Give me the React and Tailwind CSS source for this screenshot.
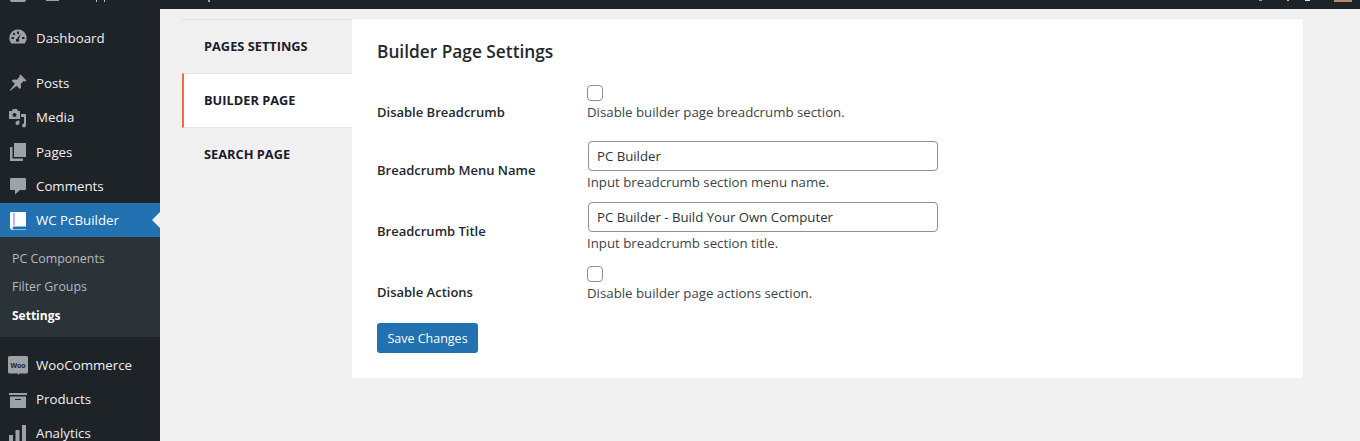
const F = '[font-family:"Open_Sans","Noto_Sans",sans-serif]';

const Dash = () => (
  <svg viewBox="0 0 20 20" className="w-5 h-5" fill="#9ca2a7"><path d="M10 1.500a8.500 8.500 0 0 0-7 13.400l.5.600h13l.5-.6A8.500 8.500 0 0 0 10 1.500z"/><g fill="#1d2327"><rect x="9" y="3.500" width="2" height="2.500"/><rect x="3.500" y="9" width="2.500" height="2"/><rect x="14" y="9" width="2.500" height="2"/><rect x="5" y="5" width="2" height="2" transform="rotate(45 6 6)"/><path d="M12.800 5.600 10.900 11.200a1.700 1.700 0 1 1-1.600-.6z"/></g></svg>
);
const Pin = () => (
  <svg viewBox="0 0 20 20" className="w-5 h-5" fill="#9ca2a7"><path d="M12.500 1.500 18.500 7.500l-1.600 1-1.200-.6-3 3 .4 3.600-1.400 1.400-3-3.200L2 18l-.4-.4 5.300-6.800-3.200-3 1.400-1.400 3.600.4 3-3-.6-1.200z"/></svg>
);
const Media = () => (
  <svg viewBox="0 0 20 20" className="w-5 h-5" fill="#9ca2a7"><path d="M1 3h3l1-2h4l1 2h2v8H1zM6.500 5a2 2 0 1 0 .01 0z" fillRule="evenodd"/><path d="M13 6h5v11.500a2 2 0 1 1-2-2V9h-3zM11.500 12.500V15a2 2 0 1 1-2-1.900V12.500z"/></svg>
);
const Pages = () => (
  <svg viewBox="0 0 20 20" className="w-5 h-5" fill="#9ca2a7"><path d="M6 1h12v14H6z"/><path d="M2 5h2.500v11.500H15V19H2z"/></svg>
);
const Comment = () => (
  <svg viewBox="0 0 20 20" className="w-5 h-5" fill="#9ca2a7"><path d="M3 2h14a1 1 0 0 1 1 1v10a1 1 0 0 1-1 1h-5l-5 4.500V14H3a1 1 0 0 1-1-1V3a1 1 0 0 1 1-1z"/></svg>
);
const Book = () => (
  <svg viewBox="0 0 20 20" className="w-5 h-5" fill="#fff"><path d="M3 1h15v14.500H6a1.500 1.500 0 0 0 0 3h12V19H5a3 3 0 0 1-3-2.500V2a1 1 0 0 1 1-1z"/><rect x="5.500" y="2" width="1" height="12.500" fill="#7f6fd0"/></svg>
);
const Woo = () => (
  <svg viewBox="0 0 20 20" className="w-5 h-5"><path d="M1.500 0h17A1.500 1.500 0 0 1 20 1.500V16a1.500 1.500 0 0 1-1.500 1.500h-7l-1 1.500-.8-1.500H1.500A1.500 1.500 0 0 1 0 16V1.500A1.500 1.500 0 0 1 1.500 0z" fill="#9ca2a7"/><text x="10" y="11.500" textAnchor="middle" fontSize="7" fontWeight="700" fill="#1d2327" fontFamily="Liberation Sans">Woo</text></svg>
);
const Box = () => (
  <svg viewBox="0 0 20 20" className="w-5 h-5" fill="#9ca2a7"><rect x="1" y="3" width="18" height="2"/><path d="M2 6.500h16V18H2zM7 9v1h6V9z" fillRule="evenodd"/></svg>
);
const Bars = () => (
  <svg viewBox="0 0 20 20" className="w-5 h-5" fill="#9ca2a7"><rect x="1" y="11" width="4" height="8"/><rect x="7.500" y="6" width="4" height="13"/><rect x="14" y="1" width="4" height="18"/></svg>
);

const Item = ({ icon, label, className = "", textClass = "" }) => (
  <div className={`flex items-center h-[34.300px] pl-[8px] gap-[8px] text-[#f0f0f1] ${className}`}>
    <span className="w-5 h-5 shrink-0 flex items-center justify-center">{icon}</span>
    <span className={textClass}>{label}</span>
  </div>
);

const Sub = ({ label, bold }) => (
  <div className={`h-[28.500px] flex items-center pl-[12px] ${bold ? "text-[12px] font-bold text-white" : "text-[12.400px] text-[#b4b9be]"}`}>{label}</div>
);

const Sidebar = () => (
  <aside className="w-[160px] shrink-0 bg-[#1d2327] text-[13.300px] overflow-hidden">
    <div className="pt-[12px]">
      <Item icon={<Dash />} label="Dashboard" textClass="mt-[2px]" />
    </div>
    <div className="mt-[11px]">
      <Item icon={<Pin />} label="Posts" textClass="mt-[2px]" />
      <Item icon={<Media />} label="Media" />
      <Item icon={<Pages />} label="Pages" textClass="mt-[2px]" />
      <Item icon={<Comment />} label="Comments" textClass="mt-[2px]" />
    </div>
    <div className="relative bg-[#2271b1] h-[34px]">
      <Item icon={<Book />} label="WC PcBuilder" className="text-white" />
      <span className="absolute right-0 top-[9px] border-y-[8px] border-r-[8px] border-y-transparent border-r-[#f0f0f1]" />
    </div>
    <div className="bg-[#2c3338] pt-[7.500px] pb-[7px]">
      <Sub label="PC Components" />
      <Sub label="Filter Groups" />
      <Sub label="Settings" bold />
    </div>
    <div className="mt-[11px]">
      <Item icon={<Woo />} label="WooCommerce" />
      <Item icon={<Box />} label="Products" />
      <Item icon={<Bars />} label="Analytics" />
    </div>
  </aside>
);

const Tab = ({ label, active, className = "" }) => (
  <div className={`flex items-center text-[12.800px] font-bold text-[#1b1b2a] ${active ? "h-[55px] bg-white border-y border-[#e2e2e2] border-l-[2px] border-l-[#f26a45] pl-[20px]" : "h-[54px] pl-[22px]"} ${className}`}>{label}</div>
);

const Row = ({ label, children, className = "", labelPad = "" }) => (
  <div className={`flex items-end ${className}`}>
    <div className={`w-[210px] shrink-0 leading-[18px] text-[13px] font-semibold text-[#23282d] ${labelPad}`}>{label}</div>
    <div className="flex-1 min-w-0 flex flex-col gap-[2px]">{children}</div>
  </div>
);

const Check = () => <div className="w-[16px] h-[16px] rounded-[4px] border border-[#8c8f94] bg-white" />;
const Input = ({ value }) => (
  <input readOnly value={value} className="block w-[350px] h-[30px] ml-[1px] rounded-[4px] border border-[#8c8f94] bg-white px-[8px] text-[13.200px] text-[#2c3338] outline-none" />
);
const Hint = ({ children }) => <p className="text-[13.250px] leading-[18px] text-[#3c434a]">{children}</p>;

export default function App() {
  return (
    <div className={`h-[441px] w-[1360px] overflow-hidden bg-[#f0f0f1] flex flex-col ${F}`}>
      <header className="relative h-[9px] bg-[#1d2327] shrink-0">
        <span className="absolute left-[10px] top-0 w-[16px] h-[2px] rounded-b-full bg-[#9ca2a7]" />
        <span className="absolute left-[46px] top-0 w-[13px] h-[1px] bg-[#9ca2a7]" />
        <span className="absolute left-[96px] top-0 w-[1px] h-[2px] bg-[#c3c4c7]" />
        <span className="absolute left-[104px] top-0 w-[1px] h-[2px] bg-[#c3c4c7]" />
        <span className="absolute left-[208px] top-0 w-[2px] h-[2px] bg-[#9ca2a7]" />
        <span className="absolute left-[1259px] top-0 w-[3px] h-[1px] bg-[#8aa0e0]" />
        <span className="absolute left-[1287px] top-0 w-[2px] h-[1px] bg-[#e0c080]" />
        <span className="absolute left-[1305px] top-0 w-[5px] h-[1px] bg-[#e8e8e8]" />
        <span className="absolute left-[1334px] top-0 w-[18px] h-[2px] bg-[#b08a70]" />
      </header>
      <div className="flex flex-1 min-h-0">
        <Sidebar />
        <main className="flex-1 pl-[22px] pt-[10px]">
          <div className="flex w-[1121px] items-start">
            <div className="w-[170px] shrink-0">
              <Tab label="PAGES SETTINGS" className="border-t border-[#e2e2e2]" />
              <Tab label="BUILDER PAGE" active />
              <Tab label="SEARCH PAGE" />
            </div>
            <section className="flex-1 h-[359px] bg-white pl-[25px] pt-[22px]">
              <h2 className="text-[17.300px] leading-[22px] font-semibold text-[#23282d]">Builder Page Settings</h2>
              <Row label="Disable Breadcrumb" className="mt-[22px]">
                <Check />
                <Hint>Disable builder page breadcrumb section.</Hint>
              </Row>
              <Row label="Breadcrumb Menu Name" className="mt-[20px]" labelPad="pb-[12px]">
                <Input value="PC Builder" />
                <Hint>Input breadcrumb section menu name.</Hint>
              </Row>
              <Row label="Breadcrumb Title" className="mt-[11px]" labelPad="pb-[12px]">
                <Input value="PC Builder - Build Your Own Computer" />
                <Hint>Input breadcrumb section title.</Hint>
              </Row>
              <Row label="Disable Actions" className="mt-[14px]" labelPad="pb-[1px]">
                <Check />
                <Hint>Disable builder page actions section.</Hint>
              </Row>
              <button className="mt-[21px] block h-[30px] w-[101px] pt-[2px] rounded-[3px] bg-[#2271b1] text-white text-[12.500px]">Save Changes</button>
            </section>
          </div>
        </main>
      </div>
    </div>
  );
}
